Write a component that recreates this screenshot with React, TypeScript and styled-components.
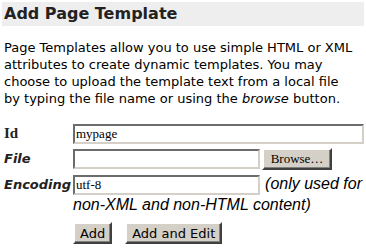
import styled, { createGlobalStyle } from "styled-components";

const GlobalStyle = createGlobalStyle`
  html, body {
    margin: 0;
    padding: 0;
    background: #fff;
  }
  body {
    font-family: "DejaVu Sans", Verdana, sans-serif;
    color: #000;
  }
`;

const Page = styled.div`
  padding: 2px;
  width: 362px;
`;

const Heading = styled.h2`
  margin: 0;
  background: #eeeeee;
  height: 24px;
  line-height: 24px;
  padding: 0 2px;
  font-size: 16px;
  font-weight: bold;
  color: #222;
`;

const Intro = styled.p`
  margin: 13px 0 0 2px;
  font-size: 13px;
  line-height: 17px;
  white-space: nowrap;
`;

const Form = styled.form`
  margin-top: 16px;
  display: grid;
  grid-template-columns: 69px 1fr;
  row-gap: 4px;
  align-items: baseline;
  padding-left: 2px;
`;

const Label = styled.label<{ $serif?: boolean }>`
  font-weight: bold;
  font-style: ${(p) => (p.$serif ? "normal" : "italic")};
  font-family: ${(p) =>
    p.$serif ? '"Liberation Serif", serif' : '"DejaVu Sans", Verdana, sans-serif'};
  font-size: ${(p) => (p.$serif ? "15px" : "13px")};
  color: #222;
`;

const Cell = styled.div`
  line-height: 20px;
`;

const TextInput = styled.input<{ $width: number }>`
  box-sizing: border-box;
  width: ${(p) => p.$width}px;
  height: 20px;
  margin: 0;
  padding: 0 1px;
  font-family: "Liberation Serif", serif;
  font-size: 13px;
  color: #000;
  background: #fff;
  border-style: solid;
  border-width: 2px;
  border-color: #6c6c6c #d4d0c8 #d4d0c8 #6c6c6c;
  outline: none;
  vertical-align: baseline;
`;

const Button = styled.button<{ $serif?: boolean }>`
  box-sizing: border-box;
  height: 22px;
  margin: 0;
  padding: 0 ${(p) => (p.$serif ? "6px" : "5px")};
  background: #d4d0c8;
  font-family: ${(p) =>
    p.$serif ? '"Liberation Serif", serif' : '"DejaVu Sans", Verdana, sans-serif'};
  font-size: 13px;
  color: #000;
  border-style: solid;
  border-width: 2px;
  border-color: #ffffff #404040 #404040 #ffffff;
  box-shadow: inset -1px -1px 0 #808080;
  vertical-align: baseline;
`;

const BrowseButton = styled(Button)`
  margin-left: 2px;
  width: 70px;
`;

const Note = styled.span`
  font-family: "Liberation Sans", Arial, sans-serif;
  font-style: italic;
  font-size: 16px;
  line-height: 18px;
`;

const Actions = styled.div`
  grid-column: 2;
  display: flex;
  gap: 13px;
  margin-top: 3px;
`;

const App = () => {
  return (
    <Page>
      <GlobalStyle />
      <Heading>Add Page Template</Heading>
      <Intro>
        Page Templates allow you to use simple HTML or XML
        <br />
        attributes to create dynamic templates. You may
        <br />
        choose to upload the template text from a local file
        <br />
        by typing the file name or using the <i>browse</i> button.
      </Intro>
      <Form onSubmit={(e) => e.preventDefault()}>
        <Label $serif>Id</Label>
        <Cell>
          <TextInput $width={291} defaultValue="mypage" />
        </Cell>
        <Label>File</Label>
        <Cell>
          <TextInput $width={187} />
          <BrowseButton $serif type="button">
            Browse…
          </BrowseButton>
        </Cell>
        <Label>Encoding</Label>
        <Cell>
          <TextInput $width={187} defaultValue="utf-8" />{" "}
          <Note>(only used for non-XML and non-HTML content)</Note>
        </Cell>
        <Actions>
          <Button type="submit">Add</Button>
          <Button type="button">Add and Edit</Button>
        </Actions>
      </Form>
    </Page>
  );
};

export default App;
